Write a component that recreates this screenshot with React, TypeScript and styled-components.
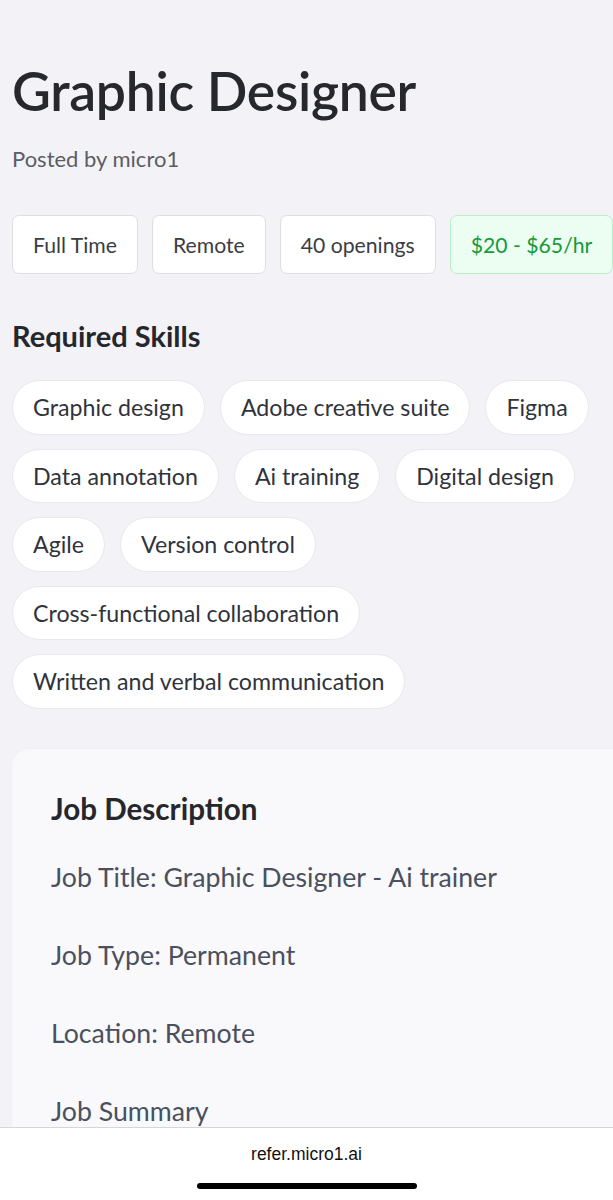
import React from "react";
import styled, { createGlobalStyle } from "styled-components";

const GlobalStyle = createGlobalStyle`
  html, body {
    margin: 0;
    padding: 0;
    background: #f3f3f7;
  }
  * {
    box-sizing: border-box;
  }
`;

const meta = [
  { label: "Full Time" },
  { label: "Remote" },
  { label: "40 openings" },
  { label: "$20 - $65/hr", pay: true },
];

const skills = [
  "Graphic design",
  "Adobe creative suite",
  "Figma",
  "Data annotation",
  "Ai training",
  "Digital design",
  "Agile",
  "Version control",
  "Cross-functional collaboration",
  "Written and verbal communication",
];

const details = [
  "Job Title: Graphic Designer - Ai trainer",
  "Job Type: Permanent",
  "Location: Remote",
  "Job Summary",
];

const App = () => {
  return (
    <Screen>
      <GlobalStyle />
      <Content>
        <Title>Graphic Designer</Title>
        <Posted>Posted by micro1</Posted>
        <TagRow>
          {meta.map((m) => (
            <Tag key={m.label} $pay={m.pay}>
              {m.label}
            </Tag>
          ))}
        </TagRow>
        <SectionTitle>Required Skills</SectionTitle>
        <Skills>
          {skills.map((s) => (
            <Skill key={s}>{s}</Skill>
          ))}
        </Skills>
        <Card>
          <CardTitle>Job Description</CardTitle>
          {details.map((d) => (
            <Detail key={d}>{d}</Detail>
          ))}
        </Card>
      </Content>
      <BottomBar>
        <Url>refer.micro1.ai</Url>
        <HomeIndicator />
      </BottomBar>
    </Screen>
  );
};

const Screen = styled.div`
  height: 100vh;
  display: flex;
  flex-direction: column;
  overflow: hidden;
  font-family: Lato, "Noto Sans", sans-serif;
  background: #f3f3f7;
`;

const Content = styled.div`
  flex: 1;
  min-height: 0;
  overflow: hidden;
  padding: 57px 0 0 12px;
`;

const Title = styled.h1`
  margin: 0;
  font-size: 53.5px;
  line-height: 66px;
  font-weight: 600;
  color: #27282d;
  letter-spacing: -0.3px;
`;

const Posted = styled.div`
  margin-top: 23px;
  font-size: 22px;
  line-height: 26px;
  color: #5b5d64;
`;

const TagRow = styled.div`
  display: flex;
  gap: 14px;
  margin-top: 43px;
  white-space: nowrap;
`;

const Tag = styled.div<{ $pay?: boolean }>`
  display: flex;
  align-items: center;
  height: 59px;
  padding: 0 20px;
  border-radius: 7px;
  font-size: 21.2px;
  border: 1.5px solid ${(p) => (p.$pay ? "#b9efc7" : "#dddde3")};
  background: ${(p) => (p.$pay ? "#ecfdf1" : "#ffffff")};
  color: ${(p) => (p.$pay ? "#169a3a" : "#3b3d45")};
`;

const SectionTitle = styled.h2`
  margin: 44px 0 0;
  font-size: 29px;
  line-height: 36px;
  font-weight: 700;
  color: #26272c;
`;

const Skills = styled.div`
  display: flex;
  flex-wrap: wrap;
  gap: 14px 15px;
  margin-top: 26px;
  padding-right: 12px;
`;

const Skill = styled.div`
  display: flex;
  align-items: center;
  height: 54.5px;
  padding: 0 20px;
  border-radius: 28px;
  background: #ffffff;
  border: 1.5px solid #e8e8ec;
  font-size: 23.2px;
  color: #30333c;
  white-space: nowrap;
`;

const Card = styled.div`
  margin: 40px -24px 0 0;
  padding: 40px 39px 0;
  background: #f9f9fb;
  border-radius: 18px;
  box-shadow: 0 0 0 1px #f0f0f4;
  min-height: 500px;
`;

const CardTitle = styled.h3`
  margin: 0;
  font-size: 29.6px;
  line-height: 40px;
  font-weight: 700;
  color: #26272c;
`;

const Detail = styled.p`
  margin: 32px 0 0;
  font-size: 26.7px;
  line-height: 32px;
  color: #4b505e;

  & + & {
    margin-top: 46px;
  }
`;

const BottomBar = styled.div`
  flex: 0 0 73px;
  display: flex;
  flex-direction: column;
  align-items: center;
  background: #ffffff;
  border-top: 1px solid #d6d6d8;
  padding-top: 16px;
`;

const Url = styled.div`
  font-family: "Liberation Sans", Arial, sans-serif;
  font-size: 17.5px;
  line-height: 20px;
  color: #111111;
`;

const HomeIndicator = styled.div`
  margin-top: 19px;
  width: 220px;
  height: 6px;
  border-radius: 3px;
  background: #000000;
`;

export default App;
